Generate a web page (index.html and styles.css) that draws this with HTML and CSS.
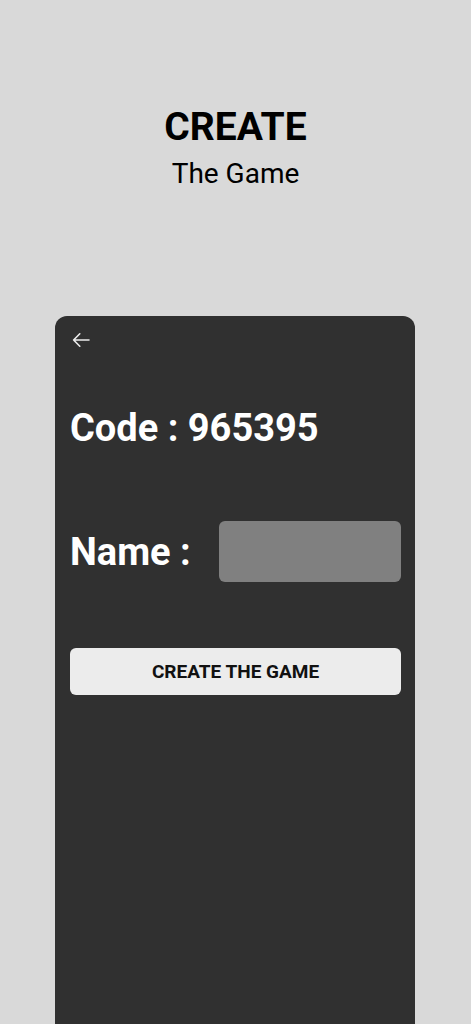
FILE: index.html
```html
<!DOCTYPE html>
<html lang="en">
<head>
<meta charset="utf-8">
<title>Create the Game</title>
<link rel="stylesheet" href="styles.css">
</head>
<body>
<div class="page">
  <header class="header">
    <h1 class="title">CREATE</h1>
    <p class="subtitle">The Game</p>
  </header>
  <main class="card">
    <button class="back" aria-label="Back">
      <svg width="20" height="20" viewBox="0 0 20 20" fill="none" stroke="#ececec" stroke-width="1.6" stroke-linecap="round" stroke-linejoin="round"><path d="M18 10H2.6M8.8 3.8L2.6 10l6.2 6.2"/></svg>
    </button>
    <div class="code">Code : 965395</div>
    <div class="name-row">
      <label class="name-label" for="name">Name :</label>
      <input class="name-input" id="name" type="text">
    </div>
    <button class="create-btn">CREATE THE GAME</button>
  </main>
</div>
</body>
</html>
```
FILE: styles.css
```css
html, body {
  margin: 0;
  padding: 0;
}
body {
  background: #d9d9d9;
  font-family: Roboto, "Liberation Sans", sans-serif;
  height: 1024px;
  overflow: hidden;
}
.page {
  display: flex;
  flex-direction: column;
  align-items: center;
}
.header {
  padding-top: 108px;
  text-align: center;
}
.title {
  margin: 0;
  font-size: 39px;
  line-height: 39px;
  font-weight: 700;
  color: #000;
}
.subtitle {
  margin: 13px 0 0;
  font-size: 28px;
  line-height: 28px;
  font-weight: 400;
  color: #000;
}
.card {
  margin-top: 128px;
  width: 360px;
  height: 760px;
  box-sizing: border-box;
  background: #303030;
  border-radius: 12px 12px 0 0;
  padding: 14px 14px 0 15px;
  display: flex;
  flex-direction: column;
  margin-left: -1px;
}
.back {
  align-self: flex-start;
  background: none;
  border: 0;
  padding: 0;
  margin-left: 1px;
  width: 20px;
  height: 20px;
  display: block;
  cursor: pointer;
}
.back svg { display: block; }
.code {
  margin-top: 59px;
  font-size: 38px;
  line-height: 38px;
  font-weight: 700;
  color: #fff;
}
.name-row {
  margin-top: 74px;
  display: flex;
  align-items: center;
  justify-content: space-between;
  height: 61px;
}
.name-label {
  font-size: 38px;
  line-height: 38px;
  font-weight: 700;
  color: #fff;
}
.name-input {
  width: 182px;
  height: 61px;
  box-sizing: border-box;
  border: 0;
  border-radius: 6px;
  background: #808080;
  outline: none;
  padding: 0 10px;
  font-family: inherit;
  font-size: 20px;
  color: #fff;
}
.create-btn {
  margin-top: 66px;
  width: 100%;
  height: 47px;
  border: 0;
  border-radius: 6px;
  background: #ececec;
  color: #111;
  font-family: inherit;
  font-size: 19px;
  font-weight: 700;
  cursor: pointer;
}
```
